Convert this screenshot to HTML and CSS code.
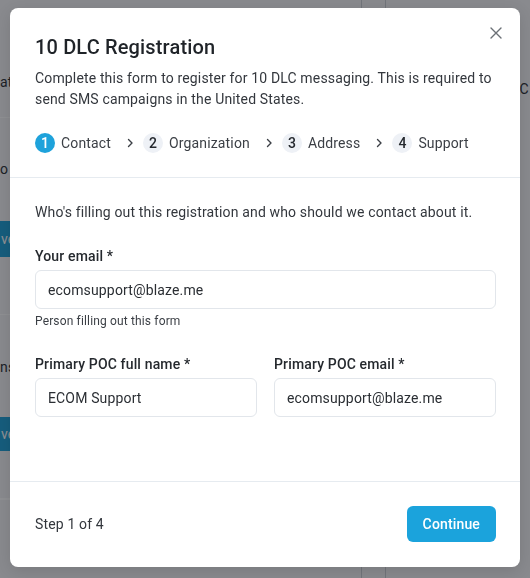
FILE: index.html
```html
<!DOCTYPE html>
<html lang="en">
<head>
<meta charset="utf-8">
<title>10 DLC Registration</title>
<link rel="stylesheet" href="styles.css">
</head>
<body>
<div class="page">
  <div class="page-main">
    <div class="bg-row bg-row-first"><span class="bg-text">at</span></div>
    <div class="bg-row bg-row-tall">
      <span class="bg-text">o</span>
      <span class="bg-btn">ve</span>
    </div>
    <div class="bg-row bg-row-mid">
      <span class="bg-text">ns</span>
      <span class="bg-btn bg-btn-2">ve</span>
    </div>
    <div class="bg-row"></div>
  </div>
  <div class="page-gutter"></div>
  <div class="page-side"><span class="side-text">DLC</span></div>
</div>

<div class="overlay"></div>

<div class="modal" role="dialog" aria-labelledby="modal-title">
  <header class="modal-header">
    <button class="close-btn" aria-label="Close">
      <svg width="12" height="12" viewBox="0 0 12 12"><path d="M1 1L11 11M11 1L1 11" stroke="#6b7076" stroke-width="1.4" stroke-linecap="round"/></svg>
    </button>
    <h1 class="modal-title" id="modal-title">10 DLC Registration</h1>
    <p class="modal-desc">Complete this form to register for 10 DLC messaging. This is required to send SMS campaigns in the United States.</p>
    <ol class="stepper">
      <li class="step step-active"><span class="step-num">1</span><span class="step-label">Contact</span></li>
      <li class="step-sep"><svg width="7" height="10" viewBox="0 0 7 10"><path d="M1.5 1.5L5 5L1.5 8.5" fill="none" stroke="#3b3f45" stroke-width="1.4" stroke-linecap="round" stroke-linejoin="round"/></svg></li>
      <li class="step"><span class="step-num">2</span><span class="step-label">Organization</span></li>
      <li class="step-sep"><svg width="7" height="10" viewBox="0 0 7 10"><path d="M1.5 1.5L5 5L1.5 8.5" fill="none" stroke="#3b3f45" stroke-width="1.4" stroke-linecap="round" stroke-linejoin="round"/></svg></li>
      <li class="step"><span class="step-num">3</span><span class="step-label">Address</span></li>
      <li class="step-sep"><svg width="7" height="10" viewBox="0 0 7 10"><path d="M1.5 1.5L5 5L1.5 8.5" fill="none" stroke="#3b3f45" stroke-width="1.4" stroke-linecap="round" stroke-linejoin="round"/></svg></li>
      <li class="step"><span class="step-num">4</span><span class="step-label">Support</span></li>
    </ol>
  </header>

  <section class="modal-body">
    <p class="intro">Who's filling out this registration and who should we contact about it.</p>
    <div class="field">
      <label class="field-label" for="your-email">Your email *</label>
      <input class="field-input" id="your-email" type="text" value="ecomsupport@blaze.me">
      <div class="field-help">Person filling out this form</div>
    </div>
    <div class="field-row">
      <div class="field">
        <label class="field-label" for="poc-name">Primary POC full name *</label>
        <input class="field-input" id="poc-name" type="text" value="ECOM Support">
      </div>
      <div class="field">
        <label class="field-label" for="poc-email">Primary POC email *</label>
        <input class="field-input" id="poc-email" type="text" value="ecomsupport@blaze.me">
      </div>
    </div>
  </section>

  <footer class="modal-footer">
    <span class="step-count">Step 1 of 4</span>
    <button class="btn-primary">Continue</button>
  </footer>
</div>
</body>
</html>
```
FILE: styles.css
```css
* { box-sizing: border-box; }

html, body {
  margin: 0;
  padding: 0;
  width: 530px;
  height: 578px;
  overflow: hidden;
}

body {
  font-family: Roboto, "Liberation Sans", Arial, sans-serif;
  letter-spacing: 0.15px;
  color: #2a2e33;
  background: #f3f4f6;
}

/* ---------- background page ---------- */
.page {
  display: grid;
  grid-template-columns: 361px 25px 1fr;
  height: 578px;
}

.page-main {
  display: flex;
  flex-direction: column;
}

.bg-row {
  border-bottom: 1px solid #ffffff;
  display: flex;
  flex-direction: column;
  align-items: flex-start;
  font-size: 14px;
  line-height: 20px;
  color: #2a2e33;
}

.bg-row-first { height: 118px; padding-top: 72px; }
.bg-row-tall { height: 197px; padding-top: 41px; gap: 42px; }
.bg-row-mid { height: 184px; padding-top: 42px; gap: 40px; }

.bg-btn {
  display: inline-block;
  background: #1b9fd6;
  color: #fff;
  height: 36px;
  line-height: 36px;
  width: 60px;
  padding-left: 1px;
  border-radius: 0 4px 4px 0;
}

.bg-btn-2 { height: 34px; line-height: 34px; }

.page-gutter {
  border-left: 1px solid #c9ccd1;
  border-right: 1px solid #c9ccd1;
}

.page-side {
  padding: 81px 0 0 117px;
  font-size: 14px;
  color: #2a2e33;
  white-space: nowrap;
}

.overlay {
  position: fixed;
  inset: 0;
  background: rgba(18, 20, 26, 0.47);
}

/* ---------- modal ---------- */
.modal {
  position: absolute;
  left: 10px;
  top: 8px;
  width: 510px;
  background: #ffffff;
  border-radius: 8px;
  box-shadow: 0 4px 16px rgba(0, 0, 0, 0.12);
}

.modal-header {
  position: relative;
  padding: 25px 24px 24px 25px;
  border-bottom: 1px solid #e6ebf0;
}

.close-btn {
  position: absolute;
  top: 19px;
  right: 18px;
  width: 12px;
  height: 12px;
  padding: 0;
  border: 0;
  background: transparent;
  display: flex;
  cursor: pointer;
}

.modal-title {
  margin: 0;
  font-size: 20px;
  line-height: 28px;
  font-weight: 500;
  color: #1f2328;
}

.modal-desc {
  margin: 7px 0 0;
  font-size: 14px;
  line-height: 21px;
  color: #33373d;
}

.stepper {
  list-style: none;
  margin: 23px 0 0;
  padding: 0;
  display: flex;
  align-items: center;
  height: 20px;
}

.step {
  display: flex;
  align-items: center;
  gap: 6px;
}

.step-num {
  width: 20px;
  height: 20px;
  border-radius: 50%;
  background: #eef1f6;
  color: #25292e;
  font-size: 14px;
  font-weight: 500;
  letter-spacing: 0;
  display: flex;
  align-items: center;
  justify-content: center;
}

.step-active .step-num {
  background: #1ea2db;
  color: #ffffff;
}

.step-label {
  font-size: 14px;
  color: #3b3f45;
}

.step-sep {
  display: flex;
  align-items: center;
  margin: 0 9px 0 16px;
}

.modal-body {
  padding: 24px 24px 64px 25px;
  border-bottom: 1px solid #e6ebf0;
}

.intro {
  margin: 0;
  font-size: 14px;
  line-height: 21px;
  color: #33373d;
}

.field {
  display: flex;
  flex-direction: column;
  margin-top: 23px;
}

.field-label {
  font-size: 14px;
  line-height: 21px;
  font-weight: 500;
  color: #25292e;
  margin-bottom: 3px;
}

.field-input {
  height: 39px;
  width: 100%;
  border: 1px solid #e2e6eb;
  border-radius: 6px;
  padding: 0 12px;
  font-family: inherit;
  font-size: 14px;
  letter-spacing: 0.15px;
  color: #2a2e33;
  background: #ffffff;
  outline: none;
}

.field-help {
  margin-top: 4px;
  font-size: 12px;
  line-height: 16px;
  color: #3b3f45;
}

.field-row {
  display: grid;
  grid-template-columns: 1fr 1fr;
  column-gap: 17px;
}

.field-row .field { margin-top: 25px; }

.modal-footer {
  display: flex;
  align-items: center;
  justify-content: space-between;
  padding: 24px 24px 25px 25px;
}

.step-count {
  font-size: 14px;
  color: #33373d;
}

.btn-primary {
  height: 36px;
  padding: 0 16px;
  border: 0;
  border-radius: 6px;
  background: #1ba3dc;
  color: #ffffff;
  font-family: inherit;
  font-size: 14px;
  font-weight: 500;
  letter-spacing: 0.15px;
  cursor: pointer;
}
```
